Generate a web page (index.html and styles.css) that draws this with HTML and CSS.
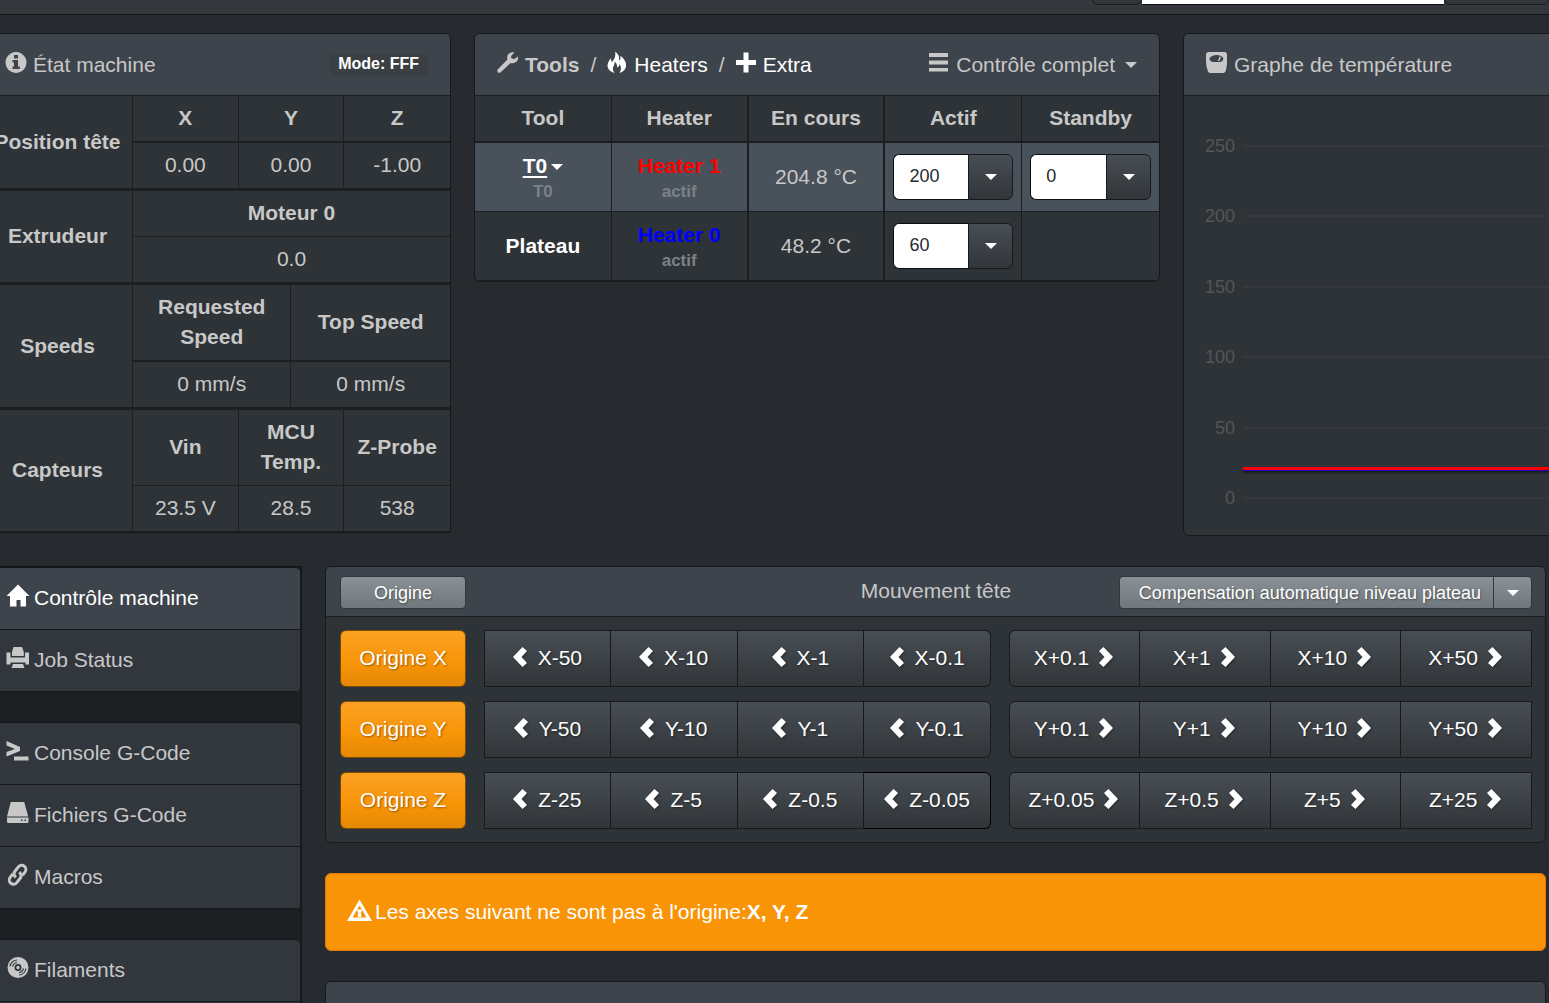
FILE: index.html
```html
<!DOCTYPE html>
<html lang="fr">
<head>
<meta charset="utf-8">
<title>Contrôle machine</title>
<link rel="stylesheet" href="styles.css">
</head>
<body>
<header class="navbar">
  <form class="navbar-form">
    <button class="btn btn-default nav-btn" type="button" aria-label="Options"></button>
    <input class="nav-input" type="text" aria-label="G-Code">
    <button class="btn btn-default nav-send" type="button" aria-label="Envoyer"></button>
  </form>
</header>

<main class="page">
  <div class="status-row">
    <section class="panel panel-status">
      <div class="panel-heading">
        <span class="title"><svg class="icon" viewBox="0 0 21 21"><path fill-rule="evenodd" d="M11 0a10.500 10.500 0 1 0 .01 0zM9 3h4v3.500H9zM7.500 8H13v6.500h1.800V17H7.500v-2.500H9v-4H7.500z"/></svg>État machine</span>
        <span class="badge">Mode: FFF</span>
      </div>
      <table class="status">
        <colgroup><col class="col-name"><col span="6"></colgroup>
        <tbody>
          <tr class="line-2"><th rowspan="2" class="line-3">Position tête</th><th colspan="2">X</th><th colspan="2">Y</th><th colspan="2">Z</th></tr>
          <tr class="line-3"><td colspan="2">0.00</td><td colspan="2">0.00</td><td colspan="2">-1.00</td></tr>
          <tr><th rowspan="2" class="line-3">Extrudeur</th><th colspan="6">Moteur 0</th></tr>
          <tr class="line-3"><td colspan="6">0.0</td></tr>
          <tr class="line-2"><th rowspan="2" class="line-3">Speeds</th><th colspan="3">Requested Speed</th><th colspan="3">Top Speed</th></tr>
          <tr class="line-3"><td colspan="3">0 mm/s</td><td colspan="3">0 mm/s</td></tr>
          <tr><th rowspan="2">Capteurs</th><th colspan="2">Vin</th><th colspan="2">MCU Temp.</th><th colspan="2">Z-Probe</th></tr>
          <tr><td colspan="2">23.5 V</td><td colspan="2">28.5</td><td colspan="2">538</td></tr>
        </tbody>
      </table>
    </section>

    <section class="panel">
      <div class="panel-heading">
        <nav class="crumbs">
          <span class="title strong"><svg class="icon" viewBox="0 0 21 21"><path d="M21 4.500 17.500 7 14.500 6.500 14 4 17.500.6C14-.6 10.800 1.500 10.300 4.500c-.3 1.500 0 2.300.2 3L.6 17.500c-1.200 2 .8 4.300 2.900 2.900L13.500 11c1.500.4 3 .3 4.500-.4C20.500 9.200 21.500 7 21 4.500z"/></svg>Tools</span>
          <span>/</span>
          <a class="title" href="#heaters"><svg class="icon icon-narrow" viewBox="0 0 21 21"><path d="M8.500-1C12 1.500 13.500 4.500 12.500 8.500 14 8 14.500 6 14 3.500 17.500 6 20.500 10 20 14.500 19.500 18 17 20.500 13 21.500 15 18.500 15.500 15.500 13 12 13 14 12 15 11 16 10.500 13.500 10.500 11.500 8 9.500 8.500 13 6 15 6.200 17.500 6.300 19 7 20 8 21.500 4 20.500.8 18 .5 14 .3 11 2.500 9 3.500 6 4.500 7.500 4.500 9 5 10 7.500 8 9.500 4 8.500-1z"/></svg>Heaters</a>
          <span>/</span>
          <a class="title" href="#extra"><svg class="icon icon-narrow" viewBox="0 0 20 21"><path d="M7.500.5h5V8H20v5h-7.500v7.500h-5V13H0V8h7.500z"/></svg>Extra</a>
        </nav>
        <button class="link-btn title" type="button"><svg class="icon icon-narrow" viewBox="0 0 20 21"><path d="M0 1h19v4H0zM0 8.500h19v4H0zM0 16h19v3.500H0z"/></svg>Contrôle complet<span class="caret"></span></button>
      </div>
      <table class="tools">
        <thead><tr class="line-2"><th>Tool</th><th>Heater</th><th>En cours</th><th>Actif</th><th>Standby</th></tr></thead>
        <tbody>
          <tr class="active">
            <th class="stacked"><a class="tool-link" href="#t0"><u>T0</u><span class="caret"></span></a><small>T0</small></th>
            <th class="stacked"><span class="heater-1">Heater 1</span><small>actif</small></th>
            <td>204.8 °C</td>
            <td class="field"><div class="input-group"><input type="text" value="200" aria-label="Actif T0"><button class="btn btn-default" type="button" aria-label="Choisir"><span class="caret"></span></button></div></td>
            <td class="field"><div class="input-group"><input type="text" value="0" aria-label="Standby T0"><button class="btn btn-default" type="button" aria-label="Choisir"><span class="caret"></span></button></div></td>
          </tr>
          <tr>
            <th><a href="#bed">Plateau</a></th>
            <th class="stacked"><span class="heater-0">Heater 0</span><small>actif</small></th>
            <td>48.2 °C</td>
            <td class="field"><div class="input-group"><input type="text" value="60" aria-label="Actif plateau"><button class="btn btn-default" type="button" aria-label="Choisir"><span class="caret"></span></button></div></td>
            <td></td>
          </tr>
        </tbody>
      </table>
    </section>

    <section class="panel">
      <div class="panel-heading">
        <span class="title"><svg class="icon" viewBox="0 0 21 21"><path fill-rule="evenodd" d="M3 0h15.500q2.500 0 2.500 3v6q0 5-1 9-.7 3-3 3h-12.500q-2.500 0-3-3Q0 14 0 9V3Q0 0 3 0zM10.500 3Q5.500 3 3.300 6.500 4.500 10 7 10H14Q16.500 10 17.500 6.500 16 3 10.500 3zM12 9 13.500 4.500l1.500.5L13.500 9z"/></svg>Graphe de température</span>
      </div>
      <div class="chart">
        <div class="tick"><span>250</span></div>
        <div class="tick"><span>200</span></div>
        <div class="tick"><span>150</span></div>
        <div class="tick"><span>100</span></div>
        <div class="tick"><span>50</span></div>
        <div class="tick"><span>0</span></div>
        <div class="series"></div>
      </div>
    </section>
  </div>

  <div class="control-row">
    <nav class="sidebar">
      <ul>
        <li class="current"><a href="#control"><svg class="icon" viewBox="0 0 21 21"><path d="M11-.5 22.500 11H19v10.500h-5.500V15h-4v6.500H3V11H-.5z"/></svg>Contrôle machine</a></li>
        <li><a href="#status"><svg class="icon" viewBox="0 0 21 21"><path d="M6.500 0h8.500l1.800 5v4H5V5zM-.5 5.500h4V10.500h14.500V5.500h4V17.500h-3.500v-2H3.500v2h-4zM3.500 11.300h14.500v2.500H3.500zM6 17h10l1.500 4h-13z"/></svg>Job Status</a></li>
      </ul>
      <ul>
        <li><a href="#console"><svg class="icon" viewBox="0 0 21 21"><path d="M-.5 1 13 7v4L-.5 16.500v-4.500l8.500-3L-.5 5.500zM7 16.500h14.500V20.500H7z"/></svg>Console G-Code</a></li>
        <li><a href="#files"><svg class="icon" viewBox="0 0 21 21"><path fill-rule="evenodd" d="M3.800 0h13.400l4 14.500H0zM0 15.500h21.500v4q0 1.500-1.500 1.500H1.500Q0 21 0 19.500V15.500zM14 17.500v1.500h1.500v-1.500zM17.500 17.500v1.500h1.500v-1.500z"/></svg>Fichiers G-Code</a></li>
        <li><a href="#macros"><svg class="icon" viewBox="0 0 21 21"><g fill="none" stroke="currentColor" stroke-width="3" transform="rotate(38 10.500 10.500)"><path d="M11 13.800q-4.500-.5-4.500-4V4a4.200 4.200 0 0 1 8.400 0V8"/><path d="M10.400 7.500q4.500.5 4.500 4v5.800a4.200 4.200 0 0 1-8.400 0V13"/></g></svg>Macros</a></li>
      </ul>
      <ul>
        <li><a href="#filaments"><svg class="icon" viewBox="0 0 21 21"><circle cx="11" cy="10.500" r="10.500"/><g fill="none" stroke="#32363c"><circle cx="11" cy="10.500" r="2.600" stroke-width="1.800"/><path d="M3 9.500Q4 3.500 10 3M5.500 9.500Q6.500 6 10 5.500M19 11.500Q18 17.500 12 18M16.500 11.500Q15.500 15 12 15.500" stroke-width="1.200"/></g></svg>Filaments</a></li>
        <li><a href="#settings" aria-label="Paramètres"></a></li>
      </ul>
    </nav>

    <div class="content">
      <section class="panel">
        <div class="move-heading">
          <button class="btn btn-light" type="button">Origine</button>
          <h2>Mouvement tête</h2>
          <div class="split"><button class="btn btn-light" type="button">Compensation automatique niveau plateau</button><button class="btn btn-light" type="button" aria-label="Options"><span class="caret"></span></button></div>
        </div>
        <div class="move-body">
          <button class="btn btn-warning" type="button">Origine X</button>
          <div class="btn-row minus"><button class="btn btn-default" type="button">X-50</button><button class="btn btn-default" type="button">X-10</button><button class="btn btn-default" type="button">X-1</button><button class="btn btn-default" type="button">X-0.1</button></div>
          <div class="btn-row plus"><button class="btn btn-default" type="button">X+0.1</button><button class="btn btn-default" type="button">X+1</button><button class="btn btn-default" type="button">X+10</button><button class="btn btn-default" type="button">X+50</button></div>
          <button class="btn btn-warning" type="button">Origine Y</button>
          <div class="btn-row minus"><button class="btn btn-default" type="button">Y-50</button><button class="btn btn-default" type="button">Y-10</button><button class="btn btn-default" type="button">Y-1</button><button class="btn btn-default" type="button">Y-0.1</button></div>
          <div class="btn-row plus"><button class="btn btn-default" type="button">Y+0.1</button><button class="btn btn-default" type="button">Y+1</button><button class="btn btn-default" type="button">Y+10</button><button class="btn btn-default" type="button">Y+50</button></div>
          <button class="btn btn-warning" type="button">Origine Z</button>
          <div class="btn-row minus"><button class="btn btn-default" type="button">Z-25</button><button class="btn btn-default" type="button">Z-5</button><button class="btn btn-default" type="button">Z-0.5</button><button class="btn btn-default pressed" type="button">Z-0.05</button></div>
          <div class="btn-row plus"><button class="btn btn-default" type="button">Z+0.05</button><button class="btn btn-default" type="button">Z+0.5</button><button class="btn btn-default" type="button">Z+5</button><button class="btn btn-default" type="button">Z+25</button></div>
        </div>
      </section>

      <div class="alert" role="alert"><svg class="alert-icon" viewBox="0 0 25 21"><path fill-rule="evenodd" d="M12.500-.5 25 21H0zM12.500 5.500 5.500 17.500h14zM9.800 9.500h5.400l-1.500 4h-2.400zM10.800 13.500h3.400V17h-3.400z"/></svg><span>Les axes suivant ne sont pas à l'origine:<b>X, Y, Z</b></span></div>

      <section class="panel"><div class="panel-heading"></div></section>
    </div>
  </div>
</main>
<script>
const NS = "http://www.w3.org/2000/svg";
for (const button of document.querySelectorAll(".btn-row .btn")) {
  const left = button.parentElement.classList.contains("minus");
  const svg = document.createElementNS(NS, "svg");
  svg.setAttribute("viewBox", "0 0 14 20");
  svg.setAttribute("class", "chevron");
  const path = document.createElementNS(NS, "path");
  path.setAttribute("d", left
    ? "M9.500 0 14 4 8.500 10 14 16 9.500 20 0 10z"
    : "M4.500 0 0 4 5.500 10 0 16 4.500 20 14 10z");
  svg.append(path);
  left ? button.prepend(svg) : button.append(svg);
}
</script>
</body>
</html>
```
FILE: styles.css
```css
* { box-sizing: border-box; }

body {
  margin: 0;
  overflow-x: hidden;
  background: #272b30;
  color: #c8c8c8;
  font: 21px/30px "Liberation Sans", Arial, sans-serif;
}

a { color: #fff; text-decoration: none; }
button, input { font: inherit; margin: 0; }
svg { fill: currentColor; overflow: visible; flex: none; }

.icon { width: 21px; height: 21px; margin-top: -5px; }
.icon-narrow { width: 20px; }

.caret {
  display: inline-block;
  border: 6px solid transparent;
  border-top-color: currentColor;
  border-bottom: 0;
}

/* top bar */
.navbar {
  display: flex;
  align-items: flex-end;
  justify-content: flex-end;
  height: 15px;
  padding-bottom: 9px;
  overflow: hidden;
  background: linear-gradient(#35393e, #33373b);
  border-bottom: 1px solid #121416;
}
.navbar-form { display: flex; width: 457px; }
.nav-btn { width: 50px; border-radius: 0 0 0 6px; }
.nav-input { width: 302px; height: 45px; border: 0; border-bottom: 1px solid #0c0d0e; background: #fff; }
.nav-send { flex: 1; border-radius: 0; }

/* page grid */
.page { margin-left: -18px; }
.status-row {
  display: grid;
  grid-template-columns: 469fr 686fr 390fr;
  column-gap: 23px;
  align-items: start;
  margin: 18px -24px 0 0;
}
.control-row {
  display: grid;
  grid-template-columns: 320px 1fr;
  column-gap: 23px;
  margin: 30px 3px 0 0;
}

/* panels */
.panel {
  background: #2e3337;
  border: 1px solid #16181b;
  border-radius: 6px;
  overflow: hidden;
  min-width: 0;
}
.panel-status { border-radius: 6px 6px 0 0; }
.panel-heading {
  display: flex;
  align-items: center;
  justify-content: space-between;
  height: 62px;
  padding: 0 22px;
  background: #3e444c;
  border-bottom: 1px solid #1c1e22;
}
.title { display: flex; align-items: center; gap: 7px; }
.strong { font-weight: bold; }
.crumbs { display: flex; gap: 11px; }
.link-btn { padding: 0; border: 0; background: none; color: inherit; }
.link-btn .caret { margin-left: 3px; }
.badge {
  padding: 0 9px 2px 8px;
  border-radius: 4px;
  background: #3a3f44;
  color: #fff;
  font-size: 16px;
  font-weight: bold;
  line-height: 20px;
}

/* tables */
table {
  width: 100%;
  table-layout: fixed;
  border-collapse: separate;
  border-spacing: 0;
  text-align: center;
}
th, td {
  padding: 7px 8px 8px;
  border: 0 solid #1c1e22;
  border-width: 0 1px 1px 0;
}
tr > :last-child { border-right-width: 0; }
.line-2 > * { border-bottom-width: 2px; }
.line-3 > *, .line-2 > .line-3, th.line-3 { border-bottom-width: 3px; }
.col-name { width: 150px; }

.tools th:nth-child(2), .tools td:nth-child(3) { border-right-width: 2px; }
.tools th:nth-child(3) { border-right-width: 2px; }
.tools tbody tr > * { height: 69px; padding-block: 6px; }
.tools tbody th { line-height: 26px; }
.tools tbody tr > .stacked { padding-block: 9px 5px; }
.active { background: #49515a; }
.tools small { display: block; font-size: 17px; color: #7a8288; }
.tool-link u { text-underline-offset: 3px; text-decoration-thickness: 2px; }
.tool-link .caret { margin-left: 4px; vertical-align: 3px; }
.heater-1 { color: #f00; }
.heater-0 { color: #00f; }

/* form controls */
.btn {
  display: flex;
  align-items: center;
  justify-content: center;
  padding: 0;
  border: 1px solid #17191c;
  border-radius: 6px;
  color: #fff;
  text-shadow: 1px 1px 2px rgba(0, 0, 0, .4);
  white-space: nowrap;
}
.btn-default { background: linear-gradient(#484e55, #3a3f44 60%, #313539); }
.btn-light {
  height: 33px;
  border-color: #33373c;
  border-radius: 4px;
  background: linear-gradient(#8a9196, #7a8288 60%, #70787d);
  font-size: 18px;
}
.btn-warning {
  border-color: #7d4a04;
  background: linear-gradient(#fba123, #f89406 60%, #e48806);
}
.input-group { display: flex; height: 46px; }
.input-group input {
  flex: 1;
  min-width: 0;
  padding: 0 15px 2px;
  border: 1px solid #0c0d0e;
  border-right: 0;
  border-radius: 6px 0 0 6px;
  background: #fff;
  color: #272b30;
  font-size: 18px;
}
.input-group .btn { width: 45px; border-radius: 0 6px 6px 0; }

/* temperature chart */
.chart {
  position: relative;
  display: flex;
  flex-direction: column;
  justify-content: space-between;
  height: 439px;
  padding: 40px 0 27px 19px;
  color: #545659;
  font-size: 18px;
  line-height: 20px;
}
.tick { display: flex; align-items: center; gap: 8px; }
.tick span { width: 32px; text-align: right; }
.tick::after { content: ""; flex: 1; height: 2px; background: #35383d; }
.series {
  position: absolute;
  left: 59px;
  right: 0;
  bottom: 64px;
  height: 4px;
  border-top: 3px solid #f00;
  background: #1a00c8;
  box-shadow: 0 2px 2px rgba(0, 0, 0, .4);
}

/* sidebar */
.sidebar {
  display: flex;
  flex-direction: column;
  gap: 30px;
  padding-right: 1px;
  background: #1c1e22;
  border: solid #121416;
  border-width: 1px 1px 0 0;
}
.sidebar ul {
  margin: 0;
  padding: 0;
  list-style: none;
  border: 1px solid #16181b;
  border-right: 0;
  border-bottom: 0;
  border-radius: 0 5px 5px 0;
  overflow: hidden;
}
.sidebar li { border-bottom: 1px solid #16181b; background: #32373d; }
.sidebar .current { background: #3e444c; }
.sidebar .current a { color: #fff; }
.sidebar a {
  display: flex;
  align-items: center;
  gap: 6px;
  height: 61px;
  padding: 0 0 2px 24px;
  color: #c8c8c8;
}

/* head movement */
.content { display: grid; gap: 30px; align-content: start; min-width: 0; }
.move-heading {
  display: grid;
  grid-template-columns: 1fr auto 1fr;
  align-items: center;
  height: 50px;
  padding: 2px 13px 0 14px;
  background: #3e444c;
  border-bottom: 1px solid #1c1e22;
}
.move-heading > .btn { width: 126px; }
.move-heading h2 { margin: 0; padding-bottom: 4px; font-size: 21px; font-weight: normal; }
.split { display: flex; justify-self: end; }
.split .btn:first-child { padding: 0 12px 0 19px; border-radius: 4px 0 0 4px; }
.split .btn:last-child { width: 39px; margin-left: -1px; border-radius: 0 4px 4px 0; }
.move-body {
  display: grid;
  grid-template-columns: 126px 507fr 523fr;
  grid-auto-rows: 57px;
  gap: 14px 18px;
  padding: 13px 13px 13px 14px;
}
.move-body .btn { padding-bottom: 1px; }
.btn-row { display: grid; grid-template-columns: repeat(4, 1fr); }
.btn-row .btn { gap: 11px; border-radius: 0; }
.plus .btn { gap: 10px; padding-right: 2px; }
.btn-row .btn + .btn { border-left-width: 0; }
.minus .btn:last-child { border-radius: 0 6px 6px 0; }
.plus .btn:first-child { border-radius: 6px 0 0 6px; }
.btn-row .pressed { border-color: #000; }
.chevron { width: 14px; height: 20px; margin-top: -2px; filter: drop-shadow(1px 1px 1px rgba(0, 0, 0, .3)); }

.alert {
  display: flex;
  align-items: center;
  gap: 3px;
  height: 78px;
  padding: 0 21px;
  border: 1px solid #e8750a;
  border-radius: 6px;
  background: #f89406;
  color: #fff;
}
.alert-icon { width: 25px; height: 21px; margin-top: -3px; }
```
